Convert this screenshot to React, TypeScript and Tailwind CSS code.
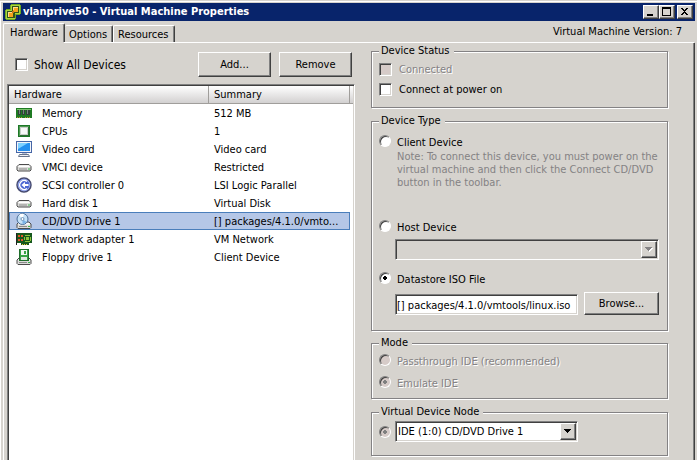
import { useState, type ReactNode } from "react";

const checkboxClass =
  "h-[13px] w-[13px] shrink-0 appearance-none border border-t-[#808080] border-l-[#808080] border-b-white border-r-white bg-white shadow-[inset_1px_1px_0_#404040,inset_-1px_-1px_0_#d6d3ce] disabled:bg-[#d6cbc8] checked:bg-[#404040]";
const radioClass =
  "h-3 w-3 shrink-0 appearance-none rounded-full border border-t-[#808080] border-l-[#808080] border-b-white border-r-white bg-white shadow-[inset_1px_1px_0_#404040] checked:bg-[radial-gradient(circle,#000_0_2px,transparent_2px)] disabled:bg-[#d6cbc8] disabled:checked:bg-[radial-gradient(circle,#808080_0_2px,transparent_2px)]";
const radioLabelClass = "flex h-[14px] items-start gap-[6px] leading-4";
const buttonClass =
  "border border-t-white border-l-white border-b-[#404040] border-r-[#404040] bg-[#d6d3ce] text-center shadow-[inset_-1px_-1px_0_#808080]";
const sunkenClass =
  "border border-t-[#808080] border-l-[#808080] border-b-white border-r-white shadow-[inset_1px_1px_0_#404040,inset_-1px_-1px_0_#d6d3ce]";
const disabledText = "text-[#848284] [text-shadow:1px_1px_0_#fff]";

function AppIcon() {
  return (
    <svg width="16" height="16" viewBox="0 0 16 16" shapeRendering="crispEdges" aria-hidden="true">
      <path d="M6 0h9v1h1v9h-1v1h-4v4h-1v1H1v-1H0V6h1V5h4V1h1z" fill="#6fa81f" />
      <path d="M6 1h9v9h-5v5H1V6h5z" fill="#a9d63f" />
      <path d="M7 2h7v7h-4v5H2V7h5z" fill="#33541a" />
      <rect x="8" y="3" width="5" height="5" fill="#f6a31d" />
      <path d="M8 3h5v1H9v2H8z" fill="#ffe08a" />
      <rect x="3" y="8" width="5" height="5" fill="#f6a31d" />
      <path d="M3 8h5v1H4v4H3z" fill="#ffe08a" />
      <rect x="7" y="7" width="2" height="2" fill="#c4761a" />
    </svg>
  );
}

function Drive({ y }: { y: number }) {
  return (
    <g>
      <path d={`M3 ${y}h10l2 2v3.500l-1 1H2l-1-1V${y + 2}z`} fill="#dcdcda" stroke="#4c4c4c" />
      <path d={`M3 ${y + 1}h10l1 1.500H2z`} fill="#fff" />
      <path d={`M3 ${y + 4.5}h8`} stroke="#8a8a8a" />
      <rect x="12" y={y + 4} width="2" height="1" fill="#39b54a" />
    </g>
  );
}

const icons: Record<string, ReactNode> = {
  memory: (
    <g shapeRendering="crispEdges">
      <rect y="3" width="16" height="10" fill="#1e7a22" />
      <rect x="1" y="4" width="14" height="1" fill="#79c46d" />
      <path d="M2 5h3v5H2zM6 5h3v5H6zM10 5h4v5h-4z" fill="#33423a" />
      <path d="M3 5h1v4H3zM7 5h1v4H7zM11 5h1v4h-1z" fill="#76867c" />
      <path d="M1 12h1v1H1zM3 12h1v1H3zM5 12h1v1H5zM9 12h1v1H9zM11 12h1v1h-1zM13 12h1v1h-1z" fill="#b69b38" />
    </g>
  ),
  cpu: (
    <g shapeRendering="crispEdges">
      <rect x="2" y="2" width="12" height="12" fill="#1d7727" />
      <rect x="3" y="3" width="10" height="10" fill="#4f9a52" />
      <rect x="4" y="4" width="9" height="9" fill="#2e6b34" />
      <rect x="4" y="4" width="8" height="8" fill="#c9cfc9" />
      <rect x="5" y="5" width="6" height="6" fill="#f8f8f8" />
    </g>
  ),
  video: (
    <g>
      <rect x=".5" y=".5" width="15" height="11" fill="#f1f4fa" stroke="#4666a6" />
      <rect x="2" y="2" width="12" height="8" fill="#2590ef" />
      <path d="M2 2h10L2 8z" fill="#7ed0ff" />
      <path d="M6 12h5v2H6z" fill="#b4bed2" />
      <path d="M3.500 13.500h9l1 2h-11z" fill="#eef1f6" stroke="#67748c" />
    </g>
  ),
  drive: <Drive y={5.5} />,
  scsi: (
    <g>
      <circle cx="8" cy="8" r="7" fill="#4c67d2" stroke="#474b6e" strokeWidth="1.500" />
      <circle cx="8" cy="8" r="5.800" fill="none" stroke="#a9b7f0" strokeWidth=".8" />
      <path d="M11 4.500A4.500 4.500 0 1 0 11 11.500" fill="none" stroke="#fff" strokeWidth="1.500" />
      <path d="M12.500 7H9V5L5.500 8 9 11V9h3.500z" fill="#fff" />
    </g>
  ),
  cd: (
    <g>
      <Drive y={9} />
      <circle cx="6.500" cy="6" r="5.500" fill="#c5e1f7" stroke="#4b6f99" />
      <path d="M6.500 6L3 2a5 5 0 0 1 5-1z" fill="#fff" />
      <path d="M6.500 6l4 3a5 5 0 0 1-4 2z" fill="#79b2e6" />
      <circle cx="6.500" cy="6" r="1.500" fill="#fff" stroke="#6e93b8" />
    </g>
  ),
  network: (
    <g shapeRendering="crispEdges">
      <path d="M0 2h16v10h-3v2H5v-2H0z" fill="#16581d" />
      <rect x="0" y="2" width="1" height="12" fill="#222" />
      <path d="M2 4h2v2H2zM5 4h2v2H5zM2 8h2v2H2zM5 8h2v2H5z" fill="#e3562c" />
      <path d="M9 4h5v1H9zM8 6h1v3H8zM10 6h3v3h-3zM14 6h1v4h-1zM9 10h5v1H9z" fill="#8fc43f" />
      <path d="M6 13h1v1H6zM8 13h1v1H8zM10 13h1v1h-1z" fill="#e0c33c" />
    </g>
  ),
  floppy: (
    <g>
      <Drive y={9} />
      <rect x="3.500" y=".5" width="9" height="11" fill="#37a344" stroke="#1f6d2b" />
      <rect x="5" y="1" width="6" height="5" fill="#f2f7f2" />
      <rect x="5" y="8" width="6" height="3" fill="#dfe8df" />
      <rect x="8" y="2" width="2" height="3" fill="#37a344" />
    </g>
  ),
};

const devices = [
  { icon: "memory", name: "Memory", summary: "512 MB" },
  { icon: "cpu", name: "CPUs", summary: "1" },
  { icon: "video", name: "Video card", summary: "Video card" },
  { icon: "drive", name: "VMCI device", summary: "Restricted" },
  { icon: "scsi", name: "SCSI controller 0", summary: "LSI Logic Parallel" },
  { icon: "drive", name: "Hard disk 1", summary: "Virtual Disk" },
  { icon: "cd", name: "CD/DVD Drive 1", summary: "[] packages/4.1.0/vmto..." },
  { icon: "network", name: "Network adapter 1", summary: "VM Network" },
  { icon: "floppy", name: "Floppy drive 1", summary: "Client Device" },
];

function Group({ title, className, children }: { title: string; className: string; children: ReactNode }) {
  return (
    <fieldset
      className={`min-w-0 border border-[#848284] px-[7px] shadow-[inset_1px_1px_0_#fff,1px_1px_0_#fff] ${className}`}
    >
      <legend className="h-[14px] bg-[#d6d3ce] pr-1 pl-[2px] leading-[14px]">{title}</legend>
      {children}
    </fieldset>
  );
}

function TitleButton({ label, children }: { label: string; children: ReactNode }) {
  return (
    <button aria-label={label} className={`h-[14px] w-4 ${buttonClass}`}>
      <svg width="13" height="12" viewBox="0 0 13 12" shapeRendering="crispEdges" aria-hidden="true">
        {children}
      </svg>
    </button>
  );
}

function DropArrow({ disabled = false }: { disabled?: boolean }) {
  return (
    <span
      className={`pointer-events-none absolute top-[2px] right-[2px] bottom-[2px] flex w-4 items-center justify-center ${buttonClass}`}
    >
      <svg width="8" height="5" viewBox="0 0 8 5" shapeRendering="crispEdges" aria-hidden="true">
        {disabled && <path d="M1 1h7v1H7v1H6v1H5v1H4V4H3V3H2V2H1z" fill="#fff" />}
        <path d="M0 0h7v1H6v1H5v1H4v1H3V3H2V2H1V1H0z" fill={disabled ? "#848284" : "#000"} />
      </svg>
    </span>
  );
}

export default function App() {
  const [selected, setSelected] = useState(6);
  const [source, setSource] = useState("iso");
  const [iso, setIso] = useState("[] packages/4.1.0/vmtools/linux.iso");

  return (
    <div className="flex h-screen flex-col overflow-hidden border-t border-[#d6d3ce] bg-[#d6d3ce] font-['DejaVu_Sans_Condensed','DejaVu_Sans',sans-serif] text-[11px] leading-[14px] text-black">
      <div className="flex flex-1 flex-col border-t border-l border-white pt-px">
        <header className="mr-[2px] ml-[2px] flex h-[18px] shrink-0 items-center bg-[#08246b] pr-[2px] pl-[2px] text-white">
          <AppIcon />
          <h1 className="ml-[2px] flex-1 font-bold">vlanprive50 - Virtual Machine Properties</h1>
          <TitleButton label="Minimize">
            <path d="M3 8h6v2H3z" />
          </TitleButton>
          <TitleButton label="Maximize">
            <path d="M2 1h9v9H2zM3 3v6h7V3z" fillRule="evenodd" />
          </TitleButton>
          <span className="w-[2px]" />
          <TitleButton label="Close">
            <path d="M3 2h2v1h1v1h1V3h1V2h2v1H9v1H8v1H7v1h1v1h1v1h1v1H8V8H7V7H6v1H5v1H3V8h1V7h1V6h1V5H5V4H4V3H3z" />
          </TitleButton>
        </header>

        <nav className="ml-[2px] flex h-[21px] shrink-0 items-end" role="tablist">
          <button
            role="tab"
            aria-selected="true"
            className="h-[19px] w-[62px] rounded-t-xs border-t border-r border-l border-t-white border-r-[#404040] border-l-white pb-px pl-[6px] text-left shadow-[inset_-1px_0_0_#808080]"
          >
            Hardware
          </button>
          <button
            role="tab"
            aria-selected="false"
            className="h-[17px] w-12 rounded-t-xs border-t border-r border-t-white border-r-[#404040] pt-px pl-1 text-left shadow-[inset_-1px_0_0_#808080]"
          >
            Options
          </button>
          <button
            role="tab"
            aria-selected="false"
            className="h-[17px] w-[62px] rounded-t-xs border-t border-r border-l border-t-white border-r-[#404040] border-l-white pt-px pl-1 text-left shadow-[inset_-1px_0_0_#808080]"
          >
            Resources
          </button>
          <p className="mr-[15px] flex-1 self-center pt-px text-right">Virtual Machine Version: 7</p>
        </nav>

        <div className="ml-[2px] flex">
          <div className="h-px w-[61px] border-l border-white" />
          <div className="mr-[3px] h-px flex-1 bg-white" />
        </div>
        <main className="mr-[2px] ml-[2px] flex min-h-0 flex-1 border-r border-l border-r-[#404040] border-l-white pl-[3px] shadow-[inset_-1px_0_0_#808080]">
          <section className="flex w-[348px] shrink-0 flex-col pt-[9px]">
            <div className="flex h-[25px] items-center pr-[3px] pl-2">
              <label className="flex flex-1 items-center gap-[6px] text-[12px]">
                <input type="checkbox" className={checkboxClass} />
                Show All Devices
              </label>
              <button className={`mr-2 h-[25px] w-[73px] ${buttonClass}`}>Add...</button>
              <button className={`h-[25px] w-[73px] ${buttonClass}`}>Remove</button>
            </div>
            <div className="mt-[7px] min-h-0 flex-1 border-t border-r border-l border-t-[#808080] border-r-white border-l-[#808080] bg-white pt-px pr-px pl-px shadow-[inset_1px_1px_0_#404040,inset_-1px_0_0_#d6d3ce]">
              <table className="w-full table-fixed border-separate border-spacing-0">
                <thead>
                  <tr className="h-[18px] bg-linear-to-b from-white to-[#d0cece]">
                    <th className="w-[200px] border-r border-b border-[#a09e9b] pl-[5px] text-left font-normal">
                      Hardware
                    </th>
                    <th className="border-r border-b border-[#a09e9b] pl-[5px] text-left font-normal">Summary</th>
                    <th className="w-[3px] border-b border-[#a09e9b]" />
                  </tr>
                </thead>
                <tbody>
                  {devices.map((d, i) => (
                    <tr
                      key={d.name}
                      onClick={() => setSelected(i)}
                      className={`h-[18px] leading-4 ${
                        i === selected
                          ? "[&>td]:border-y [&>td]:border-[#4a7ebb] [&>td:first-child]:border-l [&>td:nth-child(2)]:border-r [&>td:not(:last-child)]:bg-[#b5c7e7] [&>td:last-child]:border-y-0"
                          : "[&>td:first-child]:border-l [&>td]:border-white"
                      }`}
                    >
                      <td className="p-0">
                        <div className="flex h-4 items-center gap-[10px] pl-[6px]">
                          <svg width="16" height="16" viewBox="0 0 16 16" aria-hidden="true">
                            {icons[d.icon]}
                          </svg>
                          <span className="pt-px">{d.name}</span>
                        </div>
                      </td>
                      <td className="overflow-hidden p-0 pl-[5px] whitespace-nowrap">
                        <div className="h-4 pt-px leading-4">{d.summary}</div>
                      </td>
                      <td className="p-0" />
                    </tr>
                  ))}
                </tbody>
              </table>
            </div>
          </section>

          <section className="mr-[26px] ml-4 min-w-0 flex-1 pt-px">
            <Group title="Device Status" className="h-[64px]">
              <label className={`mt-[5px] flex h-[14px] items-start gap-[7px] ${disabledText}`}>
                <input type="checkbox" disabled className={checkboxClass} />
                Connected
              </label>
              <label className="mt-[6px] flex h-[14px] items-start gap-[7px]">
                <input type="checkbox" className={checkboxClass} />
                Connect at power on
              </label>
            </Group>

            <Group title="Device Type" className="mt-[6px] h-[217px]">
              <label className={`mt-[7px] ${radioLabelClass}`}>
                <input
                  type="radio"
                  name="source"
                  className={radioClass}
                  checked={source === "client"}
                  onChange={() => setSource("client")}
                />
                Client Device
              </label>
              <p className="mt-px ml-[18px] leading-[13px] text-[#848284]">
                Note: To connect this device, you must power on the
                <br />
                virtual machine and then click the Connect CD/DVD
                <br />
                button in the toolbar.
              </p>
              <label className={`mt-[31px] ${radioLabelClass}`}>
                <input
                  type="radio"
                  name="source"
                  className={radioClass}
                  checked={source === "host"}
                  onChange={() => setSource("host")}
                />
                Host Device
              </label>
              <div className="relative mt-[5px] mr-px ml-4 h-[21px]">
                <select disabled aria-label="Host Device" className={`h-full w-full appearance-none ${sunkenClass}`} />
                <DropArrow disabled />
              </div>
              <label className={`mt-[12px] ${radioLabelClass}`}>
                <input
                  type="radio"
                  name="source"
                  className={radioClass}
                  checked={source === "iso"}
                  onChange={() => setSource("iso")}
                />
                Datastore ISO File
              </label>
              <div className="mt-[6px] mr-px ml-4 flex items-end gap-[6px]">
                <input
                  aria-label="Datastore ISO File"
                  value={iso}
                  onChange={(e) => setIso(e.target.value)}
                  className={`h-[21px] min-w-0 flex-1 bg-white pt-px pl-px ${sunkenClass}`}
                />
                <button className={`h-[23px] w-[75px] ${buttonClass}`}>Browse...</button>
              </div>
            </Group>

            <Group title="Mode" className="mt-[5px] h-[63px]">
              <label className={`mt-[4px] ${radioLabelClass} ${disabledText}`}>
                <input type="radio" name="mode" disabled className={radioClass} />
                Passthrough IDE (recommended)
              </label>
              <label className={`mt-[8px] ${radioLabelClass} ${disabledText}`}>
                <input type="radio" name="mode" disabled defaultChecked className={radioClass} />
                Emulate IDE
              </label>
            </Group>

            <Group title="Virtual Device Node" className="mt-[6px] h-[51px]">
              <div className="mt-[2px] flex items-center gap-1">
                <input type="radio" aria-label="Virtual Device Node" disabled defaultChecked className={radioClass} />
                <div className="relative h-[21px] w-[183px]">
                  <select
                    aria-label="Device node"
                    className={`h-full w-full appearance-none bg-white pl-[2px] ${sunkenClass}`}
                  >
                    <option>IDE (1:0) CD/DVD Drive 1</option>
                  </select>
                  <DropArrow />
                </div>
              </div>
            </Group>
          </section>
        </main>
      </div>
    </div>
  );
}
